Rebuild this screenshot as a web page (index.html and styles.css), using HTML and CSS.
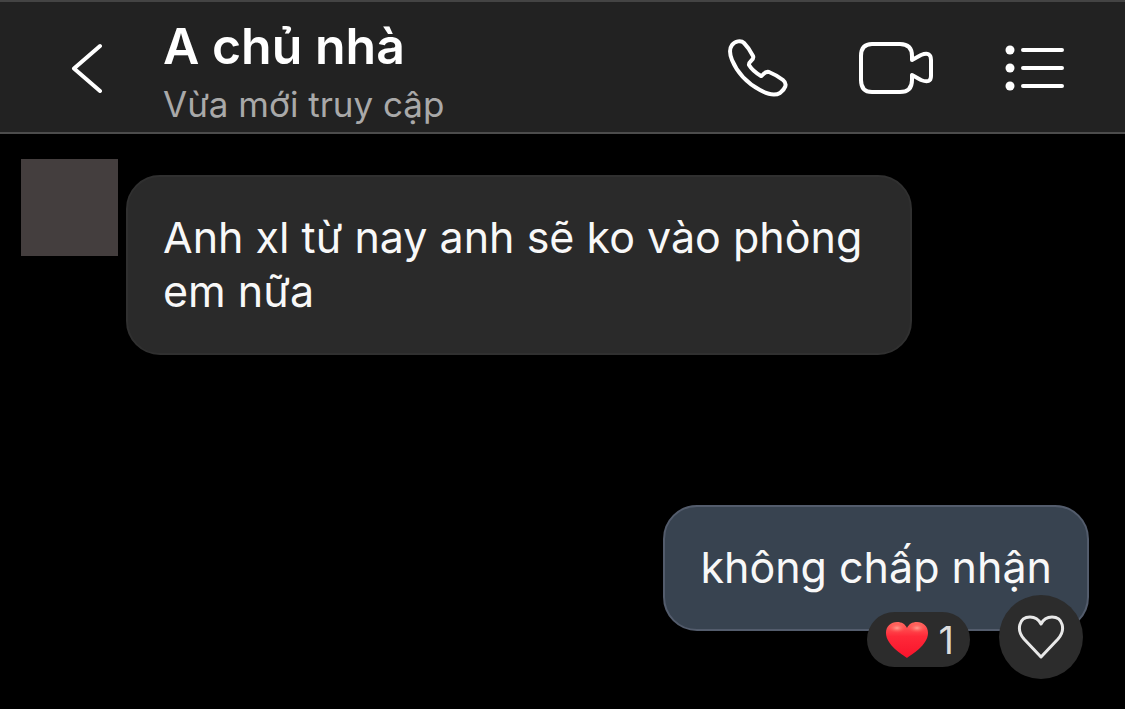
FILE: index.html
```html
<!DOCTYPE html>
<html lang="vi">
<head>
    <meta charset="UTF-8">
    <meta name="viewport" content="width=device-width, initial-scale=1.0">
    <title>A chủ nhà</title>
    <link rel="stylesheet" href="styles.css">
</head>
<body>
    <header class="chat-header">
        <button type="button" class="icon-button back" aria-label="Quay lại">
            <svg width="32" height="50" viewBox="0 0 32 50">
                <path d="M29 3 L3 25.500 L29 48"/>
            </svg>
        </button>
        <div class="contact">
            <h1>A chủ nhà</h1>
            <p>Vừa mới truy cập</p>
        </div>
        <div class="actions">
            <button type="button" class="icon-button" aria-label="Gọi điện">
                <svg width="60" height="58" viewBox="0 0 60 58">
                    <path d="M4 6 C7 2 13 1 16 4 C20 8 23 13 25 17 C27 21 20 22 21 26 C24 31 28 34 33 37 C36 36 36 32 41 33 C46 35 51 38 55 41 C60 45 57 50 52 54 C47 57 39 55 32 51 C19 44 9 33 4 21 C2 16 1 10 4 6 Z"/>
                </svg>
            </button>
            <button type="button" class="icon-button" aria-label="Gọi video">
                <svg width="76" height="56" viewBox="0 0 76 56">
                    <path d="M14 4 H42 Q54 4 54 16 V20 L63 15 Q73 11 73 20 V36 Q73 44 63 40 L54 35 V40 Q54 52 42 52 H14 Q3 52 3 40 V16 Q3 4 14 4 Z"/>
                </svg>
            </button>
            <button type="button" class="icon-button" aria-label="Tùy chọn">
                <svg width="62" height="50" viewBox="0 0 62 50">
                    <path d="M19 7 H58 M19 25 H58 M19 43 H58"/>
                    <g class="dots">
                        <circle cx="6" cy="7" r="4.500"/>
                        <circle cx="6" cy="25" r="4.500"/>
                        <circle cx="6" cy="43" r="4.500"/>
                    </g>
                </svg>
            </button>
        </div>
    </header>

    <main class="messages">
        <div class="message received">
            <div class="avatar"></div>
            <p class="bubble">Anh xl từ nay anh sẽ ko vào phòng em nữa</p>
        </div>
        <div class="message sent">
            <div class="bubble">
                không chấp nhận
                <div class="reactions">
                    <button type="button" class="reaction-count">
                        <svg width="44" height="38" viewBox="0 0 44 38">
                            <defs>
                                <linearGradient id="red" x1="0" y1="0" x2="0" y2="1">
                                    <stop offset="0" stop-color="#ff685f"/>
                                    <stop offset="0.4" stop-color="#ff2939"/>
                                    <stop offset="1" stop-color="#f8132b"/>
                                </linearGradient>
                                <radialGradient id="shine">
                                    <stop offset="0" stop-color="#ffb5a3" stop-opacity="0.8"/>
                                    <stop offset="1" stop-color="#ff5650" stop-opacity="0"/>
                                </radialGradient>
                            </defs>
                            <path fill="url(#red)" d="M22 37 C18 34 1 24 1 12 C1 5 6 1 12 1 C17 1 20 3 22 7 C24 3 27 1 32 1 C38 1 43 5 43 12 C43 24 26 34 22 37 Z"/>
                            <ellipse fill="url(#shine)" cx="12" cy="7" rx="9" ry="5"/>
                            <ellipse fill="url(#shine)" cx="32" cy="7" rx="9" ry="5"/>
                        </svg>
                        <span>1</span>
                    </button>
                    <button type="button" class="reaction-add" aria-label="Thả tim">
                        <svg width="48" height="46" viewBox="0 0 48 46">
                            <path d="M24 43 L7 25 C-1 16 2 3 13 3 C19 3 22 6 24 10 C26 6 29 3 35 3 C46 3 49 16 41 25 Z"/>
                        </svg>
                    </button>
                </div>
            </div>
        </div>
    </main>
</body>
</html>
```

FILE: styles.css
```css
* {
    box-sizing: border-box;
}

body {
    margin: 0;
    background-color: #000000;
    color: #f8f8f8;
    font-family: Inter, "Liberation Sans", sans-serif;
}

h1, p {
    margin: 0;
}

button {
    border: none;
    padding: 0;
    color: inherit;
    font-family: inherit;
    cursor: pointer;
}

svg {
    display: block;
    fill: none;
    stroke-linecap: round;
    stroke-linejoin: round;
}

/* Header */
.chat-header {
    display: flex;
    align-items: center;
    padding: 8px 59px 6px 71px;
    background-color: #222222;
    border-top: 2px solid #444444;
    border-bottom: 2px solid #4c4c4c;
}

.icon-button {
    background: none;
    stroke: #ffffff;
    stroke-width: 4;
}

.dots {
    fill: #ffffff;
    stroke: none;
}

.contact {
    flex: 1;
    margin-left: 60px;
}

.contact h1 {
    font-size: 50px;
    font-weight: 600;
    line-height: 72px;
    color: #ffffff;
}

.contact p {
    font-size: 35px;
    line-height: 44px;
    color: #a9a9a9;
}

.actions {
    display: flex;
    align-items: center;
    gap: 70px;
}

/* Messages */
.messages {
    padding: 25px 36px 78px 21px;
}

.message {
    display: flex;
    align-items: flex-start;
}

.avatar {
    flex: none;
    width: 97px;
    height: 97px;
    margin-right: 8px;
    background-color: #443e3e;
}

.bubble {
    padding: 33px 35px 35px;
    border: 2px solid #303030;
    border-radius: 34px;
    background-color: #2a2a2a;
    font-size: 43px;
    line-height: 54px;
}

.received .bubble {
    max-width: 786px;
    margin-top: 16px;
}

.sent {
    justify-content: flex-end;
    margin-top: 150px;
}

.sent .bubble {
    position: relative;
    border-color: #535c6c;
    background-color: #384350;
}

/* Reactions overlap the bottom edge of the bubble */
.reactions {
    position: absolute;
    right: 4px;
    bottom: -50px;
    display: flex;
    align-items: center;
    gap: 29px;
}

.reaction-count {
    display: flex;
    align-items: center;
    gap: 10px;
    height: 55px;
    margin-top: 5px;
    padding: 0 16px 0 18px;
    border-radius: 28px;
    background-color: #2c2c2c;
    color: #dddddd;
    font-size: 38px;
}

.reaction-add {
    display: flex;
    align-items: center;
    justify-content: center;
    width: 84px;
    height: 84px;
    border-radius: 50%;
    background-color: #2c2c2c;
    stroke: #e8e8e8;
    stroke-width: 3;
}
```
